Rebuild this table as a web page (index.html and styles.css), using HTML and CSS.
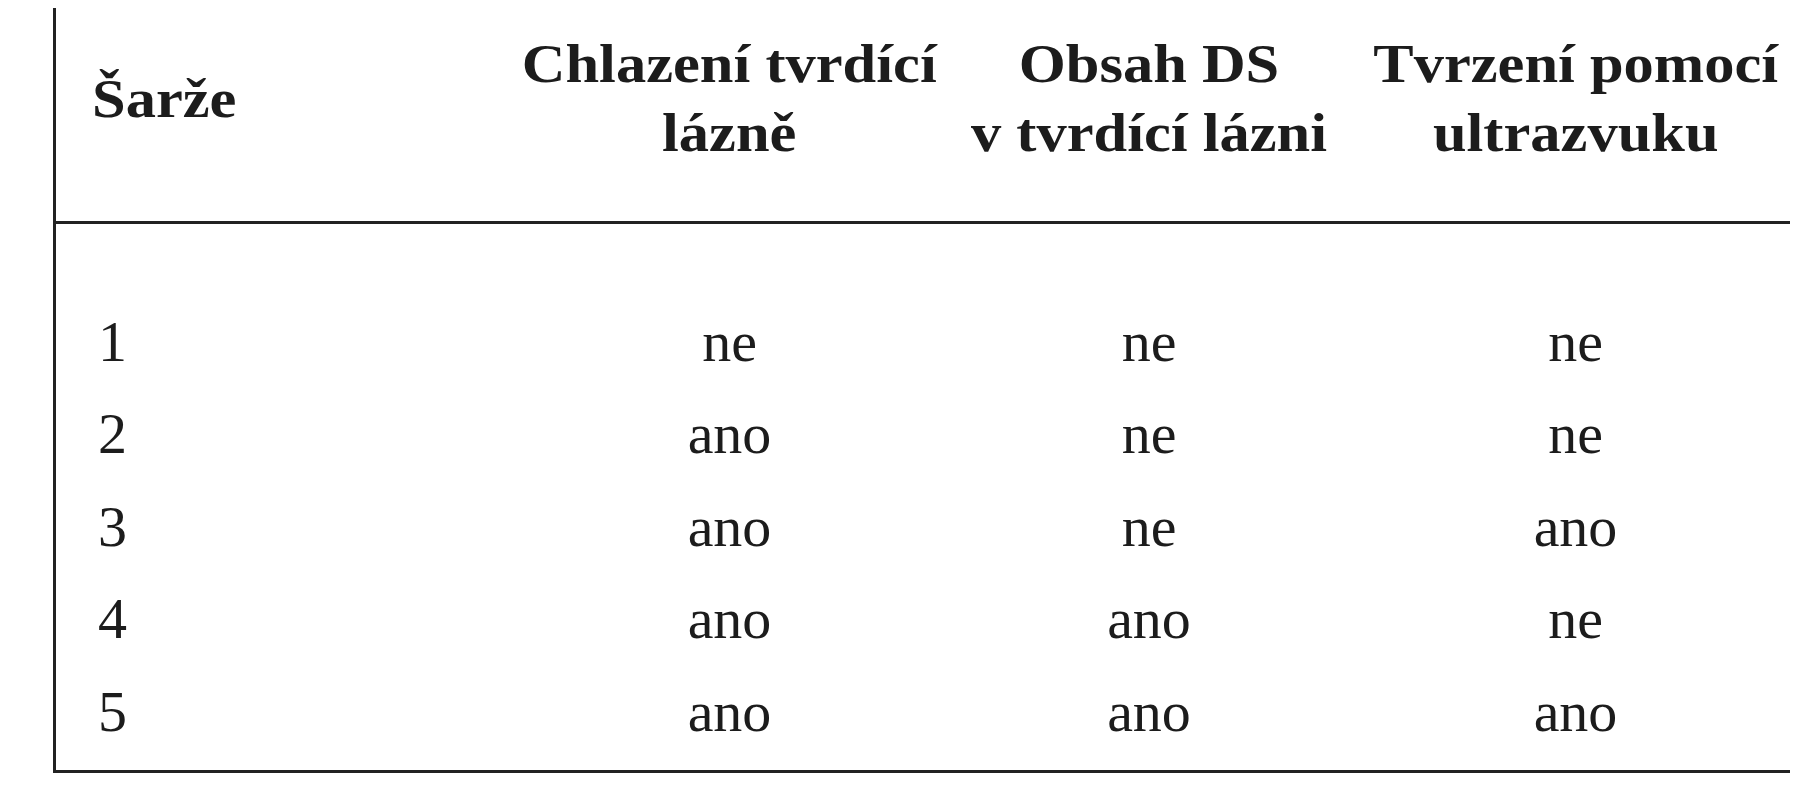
FILE: index.html
```html
<!DOCTYPE html>
<html lang="cs">
<head>
<meta charset="utf-8">
<title>Šarže</title>
<link rel="stylesheet" href="styles.css">
</head>
<body>
<div class="table">
  <div class="head">
    <div class="cell first"><span class="wide">Šarže</span></div>
    <div class="cell"><span class="wide">Chlazení tvrdící<br>lázně</span></div>
    <div class="cell"><span class="wide">Obsah DS<br>v tvrdící lázni</span></div>
    <div class="cell"><span class="wide">Tvrzení pomocí<br>ultrazvuku</span></div>
  </div>
  <div class="body">
    <div class="row"><div class="cell first">1</div><div class="cell">ne</div><div class="cell">ne</div><div class="cell">ne</div></div>
    <div class="row"><div class="cell first">2</div><div class="cell">ano</div><div class="cell">ne</div><div class="cell">ne</div></div>
    <div class="row"><div class="cell first">3</div><div class="cell">ano</div><div class="cell">ne</div><div class="cell">ano</div></div>
    <div class="row"><div class="cell first">4</div><div class="cell">ano</div><div class="cell">ano</div><div class="cell">ne</div></div>
    <div class="row"><div class="cell first">5</div><div class="cell">ano</div><div class="cell">ano</div><div class="cell">ano</div></div>
  </div>
</div>
</body>
</html>
```
FILE: styles.css
```css
html, body {
  margin: 0;
  padding: 0;
  background: #ffffff;
}
body {
  font-family: "Liberation Serif", "Times New Roman", serif;
  color: #1c1c1c;
}
.table {
  margin: 8px 0 0 53px;
  width: 1737px;
  border-left: 3px solid #222;
  border-bottom: 3px solid #222;
  box-sizing: border-box;
}
.head, .row {
  display: grid;
  grid-template-columns: 466px 415px 424px 429px;
  align-items: center;
}
.head {
  height: 216px;
  padding-bottom: 31px;
  box-sizing: border-box;
  border-bottom: 3px solid #222;
  font-weight: bold;
  font-size: 54px;
  line-height: 69px;
}
.wide {
  display: inline-block;
  transform: scaleX(1.12);
}
.first .wide {
  transform-origin: left center;
}
.head .cell.first {
  padding-left: 36px;
}
.body {
  padding: 71.6px 0 12px;
  font-size: 58px;
}
.row {
  height: 92.5px;
  line-height: 92.5px;
}
.cell {
  text-align: center;
  white-space: nowrap;
}
.cell.first {
  text-align: left;
  padding-left: 42px;
}
```
